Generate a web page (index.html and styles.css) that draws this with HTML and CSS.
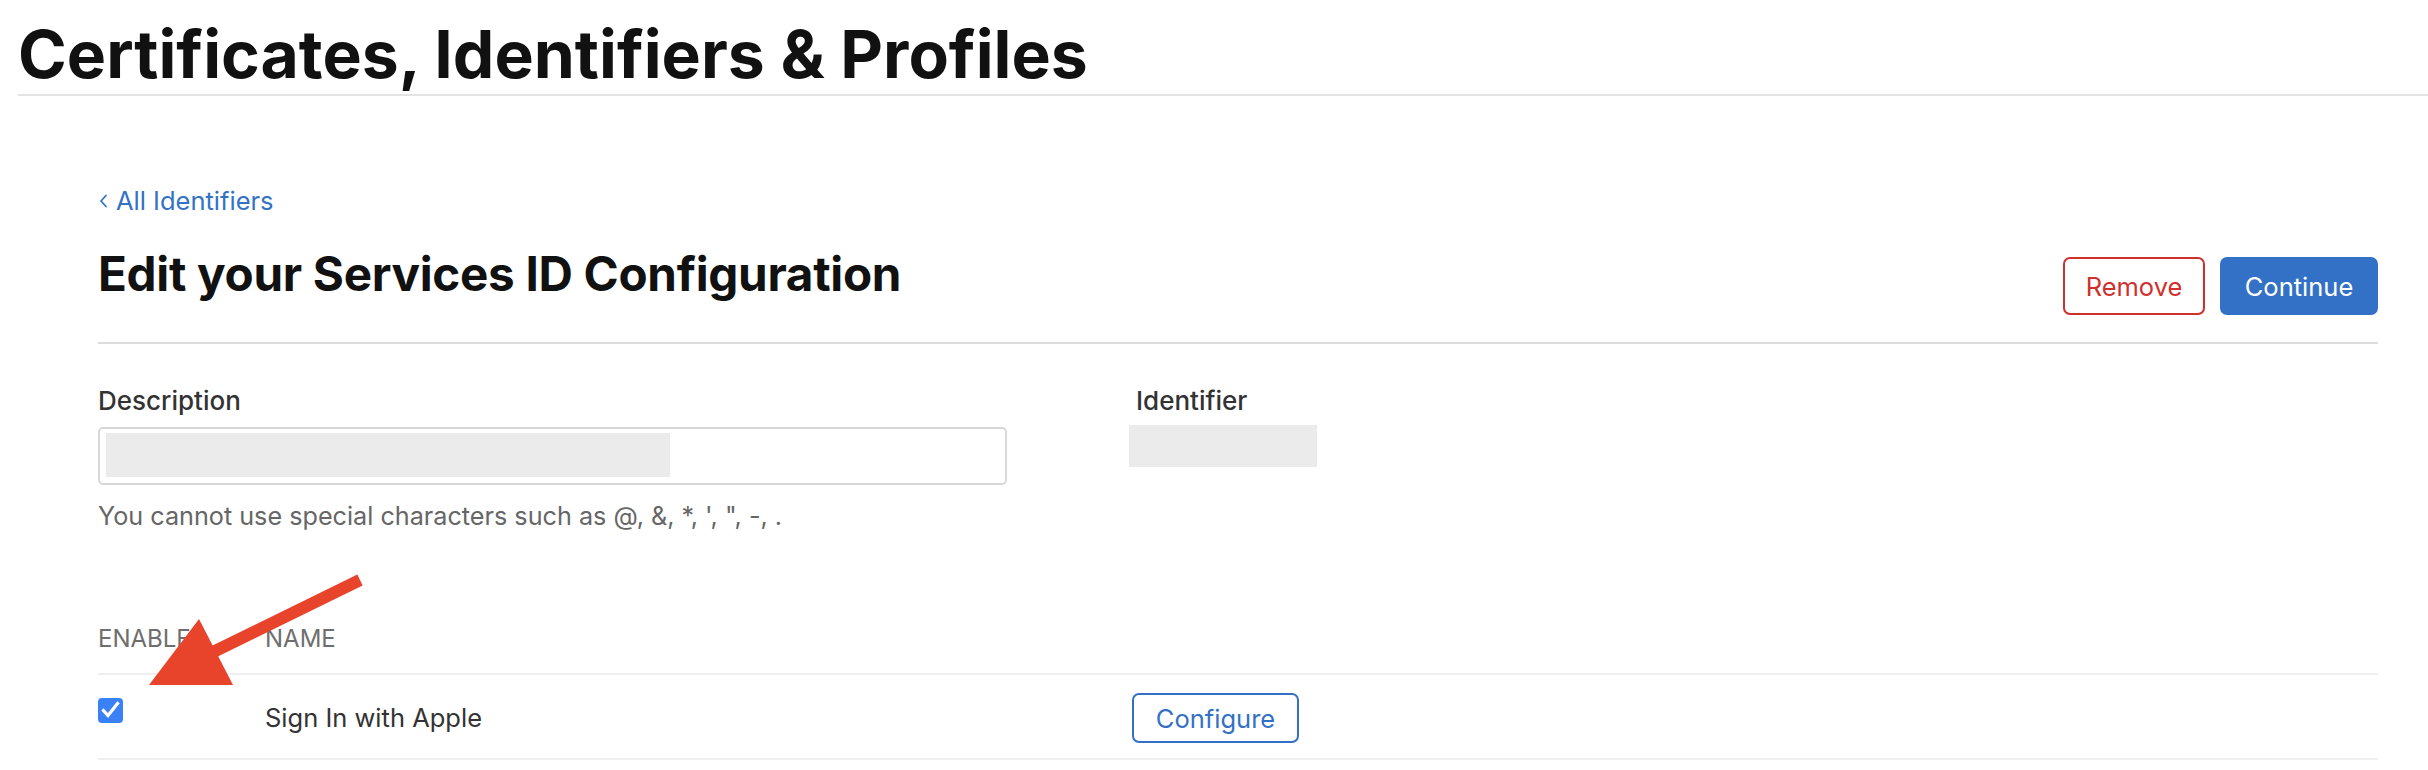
FILE: index.html
```html
<!DOCTYPE html>
<html lang="en">
<head>
<meta charset="utf-8">
<title>Certificates, Identifiers &amp; Profiles</title>
<link rel="stylesheet" href="styles.css">
</head>
<body>
<header class="site-header">
  <h1 class="site-title">Certificates, Identifiers &amp; Profiles</h1>
</header>
<main class="content">
  <a class="back-link" href="#">
    <svg class="chev" width="9" height="14" viewBox="0 0 9 14"><path d="M7 1.5 L2 7 L7 12.5" fill="none" stroke="currentColor" stroke-width="1.8" stroke-linecap="round" stroke-linejoin="round"/></svg>
    <span>All Identifiers</span>
  </a>
  <div class="page-head">
    <h2 class="page-title">Edit your Services ID Configuration</h2>
    <div class="actions">
      <button class="btn btn-remove">Remove</button>
      <button class="btn btn-primary">Continue</button>
    </div>
  </div>
  <section class="fields">
    <div class="field">
      <div class="field-label">Description</div>
      <div class="text-input"><span class="redact redact-desc"></span></div>
      <p class="hint">You cannot use special characters such as @, &amp;, *, ', ", -, .</p>
    </div>
    <div class="field field-id">
      <div class="field-label">Identifier</div>
      <span class="redact redact-id"></span>
    </div>
  </section>
  <div class="caps">
    <div class="caps-head caps-grid"><span>Enabled</span><span>Name</span></div>
    <div class="caps-row caps-grid">
      <span class="checkbox"><svg width="25" height="25" viewBox="0 0 25 25"><path d="M5.5 12.5 L10 17.5 L19.5 5.5" fill="none" stroke="#fff" stroke-width="3.2" stroke-linecap="square" stroke-linejoin="miter"/></svg></span>
      <span class="cap-name">Sign In with Apple</span>
      <span class="cap-action"><button class="btn btn-outline">Configure</button></span>
    </div>
  </div>
</main>
<svg class="annotation" width="400" height="720" viewBox="0 0 400 720">
  <line x1="360" y1="580" x2="205" y2="656" stroke="#e8432b" stroke-width="12"/>
  <polygon points="199,619 149,685 233,685" fill="#e8432b"/>
</svg>
</body>
</html>
```
FILE: styles.css
```css
* { box-sizing: border-box; }
html, body { margin: 0; padding: 0; background: #fff; }
body {
  font-family: Inter, "Noto Sans", "Liberation Sans", sans-serif;
  color: #1d1d1f;
  position: relative;
  width: 2428px;
  min-height: 770px;
}
.site-header {
  margin-left: 18px;
  padding-top: 18px;
  padding-bottom: 4px;
  border-bottom: 2px solid #e3e3e3;
}
.site-title {
  margin: 0;
  font-size: 66px;
  line-height: 72px;
  font-weight: 700;
  color: #111;
  letter-spacing: 0;
}
.content {
  padding: 0 50px 0 98px;
}
.back-link {
  margin-top: 90px;
  display: inline-flex;
  align-items: center;
  gap: 8px;
  padding-left: 1px;
  font-size: 25.5px;
  line-height: 30px;
  color: #3372c5;
  text-decoration: none;
}
.chev { display: block; }
.page-head {
  margin-top: 30px;
  display: flex;
  justify-content: space-between;
  align-items: flex-start;
  padding-bottom: 27px;
  border-bottom: 2px solid #dcdcdc;
}
.page-title {
  margin: 0;
  font-size: 47.6px;
  line-height: 56px;
  font-weight: 700;
  color: #111;
  letter-spacing: -0.3px;
}
.actions {
  margin-top: 11px;
  display: flex;
  gap: 15px;
}
.btn {
  font-family: inherit;
  font-size: 25.5px;
  height: 58px;
  border-radius: 7px;
  cursor: pointer;
  padding: 0;
}
.btn-remove {
  width: 142px;
  background: #fff;
  color: #d0302c;
  border: 2px solid #d0302c;
}
.btn-primary {
  width: 158px;
  background: #3371c6;
  color: #fff;
  border: 2px solid #3371c6;
}
.btn-outline {
  width: 167px;
  height: 50px;
  background: #fff;
  color: #3371c6;
  border: 2px solid #3371c6;
}
.fields {
  margin-top: 42px;
  display: grid;
  grid-template-columns: 1038px 1fr;
}
.field-label {
  font-size: 26px;
  line-height: 30px;
  font-weight: 500;
  color: #333;
}
.text-input {
  margin-top: 11px;
  width: 909px;
  height: 58px;
  border: 2px solid #d8d8d8;
  border-radius: 5px;
  padding: 4px 0 0 6px;
}
.redact {
  display: block;
  background: #ebebeb;
  filter: blur(0.6px);
}
.redact-desc { width: 564px; height: 44px; }
.redact-id { margin-top: 9px; margin-left: -7px; width: 188px; height: 42px; }
.hint {
  margin: 16px 0 0;
  font-size: 25.2px;
  line-height: 30px;
  color: #666;
}
.caps { margin-top: 93px; }
.caps-grid {
  display: grid;
  grid-template-columns: 167px 867px auto;
}
.caps-head {
  font-size: 24px;
  line-height: 30px;
  color: #6e6e6e;
  text-transform: uppercase;
  padding-bottom: 19px;
}
.caps-row {
  border-top: 2px solid #efefef;
  border-bottom: 2px solid #efefef;
  padding: 18px 0 15px;
  align-items: center;
}
.checkbox {
  align-self: start;
  margin-top: 5px;
  width: 25px;
  height: 25px;
  border-radius: 4px;
  background: #3a80f6;
  display: block;
}
.checkbox svg { display: block; }
.cap-name {
  font-size: 25.5px;
  line-height: 30px;
  color: #333;
}
.annotation {
  position: absolute;
  left: 0;
  top: 0;
  pointer-events: none;
}
```
